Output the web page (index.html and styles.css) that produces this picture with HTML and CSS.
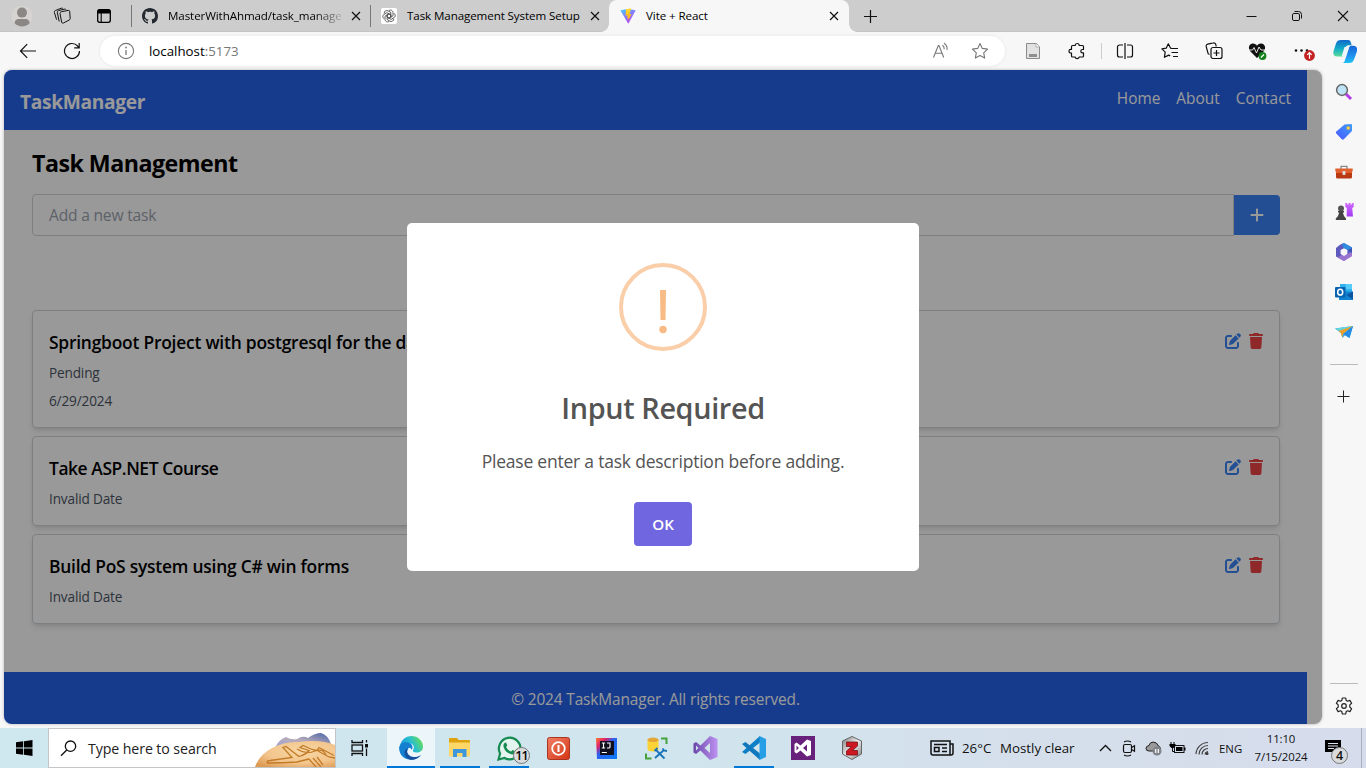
FILE: index.html
```html
<!DOCTYPE html>
<html lang="en">
<head>
<meta charset="utf-8">
<title>Vite + React</title>
<link rel="stylesheet" href="styles.css">
</head>
<body>
<svg class="defs" width="0" height="0">
  <defs>
    <symbol id="edit" viewBox="0 0 512 512"><path d="M471.6 21.7c-21.9-21.9-57.3-21.9-79.2 0L362.3 51.7l97.9 97.9 30.1-30.1c21.9-21.9 21.9-57.3 0-79.2L471.6 21.7zm-299.2 220c-6.1 6.1-10.8 13.6-13.5 21.9l-29.6 88.8c-2.9 8.6-.6 18.1 5.8 24.6s15.9 8.7 24.6 5.8l88.8-29.6c8.2-2.7 15.7-7.4 21.9-13.5L437.7 172.3 339.7 74.3 172.4 241.7zM96 64C43 64 0 107 0 160V416c0 53 43 96 96 96H352c53 0 96-43 96-96V320c0-17.7-14.3-32-32-32s-32 14.3-32 32v96c0 17.7-14.3 32-32 32H96c-17.7 0-32-14.3-32-32V160c0-17.7 14.3-32 32-32h96c17.7 0 32-14.3 32-32s-14.3-32-32-32H96z"/></symbol>
    <symbol id="trash" viewBox="0 0 448 512"><path d="M135.2 17.7L128 32H32C14.3 32 0 46.3 0 64S14.3 96 32 96H416c17.7 0 32-14.3 32-32s-14.3-32-32-32H320l-7.2-14.3C307.4 6.8 296.3 0 284.2 0H163.8c-12.1 0-23.2 6.8-28.6 17.7zM416 128H32L53.2 467c1.6 25.3 22.6 45 47.9 45H346.9c25.3 0 46.3-19.7 47.9-45L416 128z"/></symbol>
    <symbol id="close" viewBox="0 0 10 10"><path d="M1 1l8 8M9 1L1 9" fill="none" stroke="#111" stroke-width="1.2"/></symbol>
    <linearGradient id="gVite" x1="0" y1="0" x2=".6" y2="1"><stop offset="0" stop-color="#41d1ff"/><stop offset="1" stop-color="#bd34fe"/></linearGradient>
    <linearGradient id="gBolt" x1="0" y1="0" x2="0" y2="1"><stop offset="0" stop-color="#ffdd35"/><stop offset="1" stop-color="#ffa800"/></linearGradient>
    <linearGradient id="gCopA" x1="0" y1="0" x2="0" y2="1"><stop offset="0" stop-color="#1268c9"/><stop offset=".5" stop-color="#10a9c8"/><stop offset="1" stop-color="#5bdc9a"/></linearGradient>
    <linearGradient id="gCopB" x1="0" y1="0" x2="0" y2="1"><stop offset="0" stop-color="#1565d8"/><stop offset=".6" stop-color="#2193f0"/><stop offset="1" stop-color="#1cc3f3"/></linearGradient>
    <linearGradient id="gTag" x1="1" y1="0" x2="0" y2="1"><stop offset="0" stop-color="#3ea0ff"/><stop offset="1" stop-color="#4a55ff"/></linearGradient>
    <linearGradient id="gRook" x1="0" y1="0" x2="0" y2="1"><stop offset="0" stop-color="#d06bff"/><stop offset="1" stop-color="#a23af0"/></linearGradient>
    <linearGradient id="gEdge" x1="1" y1=".2" x2="0" y2=".6"><stop offset="0" stop-color="#6fe04c"/><stop offset=".5" stop-color="#28bfd0"/><stop offset="1" stop-color="#1b8fe0"/></linearGradient>
    <linearGradient id="gVs" x1="0" y1="0" x2="1" y2="0"><stop offset="0" stop-color="#6b48a8"/><stop offset="1" stop-color="#bd92f2"/></linearGradient>
    <linearGradient id="gIj" x1="0" y1="0" x2="1" y2="1"><stop offset="0" stop-color="#fc7a2c"/><stop offset=".25" stop-color="#e0206a"/><stop offset=".45" stop-color="#2b62f0"/><stop offset="1" stop-color="#087cfa"/></linearGradient>
    <linearGradient id="gRed" x1="0" y1="0" x2="1" y2="1"><stop offset="0" stop-color="#f08066"/><stop offset="1" stop-color="#d53413"/></linearGradient>
    <linearGradient id="gHill" x1="0" y1="1" x2="1" y2="0"><stop offset="0" stop-color="#9fa4d6"/><stop offset=".5" stop-color="#b7abb9"/><stop offset="1" stop-color="#4864a8"/></linearGradient>
    <radialGradient id="gHand" cx=".6" cy=".4" r=".75"><stop offset="0" stop-color="#f8d7a4"/><stop offset=".6" stop-color="#f3c58d"/><stop offset="1" stop-color="#dd9a52"/></radialGradient>
    <linearGradient id="gSilver" x1="0" y1="0" x2="1" y2="1"><stop offset="0" stop-color="#777"/><stop offset=".5" stop-color="#eee"/><stop offset="1" stop-color="#777"/></linearGradient>
  </defs>
</svg>

<div class="desktop">
  <header class="tabstrip">
    <div class="slot w-avatar"><svg width="22" height="22" viewBox="0 0 22 22"><circle cx="11" cy="11" r="10.5" fill="#d6d4d1"/><circle cx="11" cy="7.6" r="5" fill="#8a8785"/><path d="M3.6 18.3c0-3 2-4.3 4-4.3h7c2 0 4 1.3 4 4.3a10.5 10.5 0 0 1-15 0z" fill="#8a8785"/></svg></div>
    <div class="slot w40"><svg width="18" height="18" viewBox="0 0 18 18" fill="none" stroke="#111" stroke-width="1"><path d="M8.500 4.700l6.700-1.300q1.300-.2 1.500 1l.5 7.200q0 1-1 1.400l-5.800 3q-1.400.6-1.700-.7L7 6.500q-.1-1.500 1.500-1.800z"/><path d="M6.200 14.500L4.300 5.500q-.2-1.500 1.200-1.900l6.200-1.500q1-.2 1.300.6"/><path d="M3.600 12.700L1.400 5.500q-.4-1.500 1-2L8.300 1.200q1-.3 1.500.3"/></svg></div>
    <div class="slot w44"><svg width="16" height="16" viewBox="0 0 16 16"><rect x="1.7" y="1.7" width="12.6" height="12.6" rx="2" fill="none" stroke="#000" stroke-width="1.3"/><path d="M1.500 3a2 2 0 0 1 2-1.800h9a2 2 0 0 1 2 1.800v2.400h-13z"/><path d="M5.200 5v9" stroke="#000" stroke-width="1.1"/></svg></div>
    <div class="tab tab-github">
      <svg width="16" height="16" viewBox="0 0 16 16" fill="#24292f"><path d="M8 0C3.580 0 0 3.580 0 8c0 3.540 2.290 6.530 5.470 7.590.4.070.55-.17.55-.38 0-.19-.01-.82-.01-1.490-2.010.37-2.530-.49-2.690-.94-.09-.23-.48-.94-.82-1.130-.28-.15-.68-.52-.01-.53.63-.01 1.080.58 1.230.82.72 1.210 1.870.87 2.330.66.070-.52.28-.87.51-1.070-1.780-.2-3.640-.89-3.640-3.950 0-.87.31-1.590.82-2.150-.08-.2-.36-1.020.08-2.120 0 0 .67-.21 2.200.82.64-.18 1.320-.27 2-.27s1.360.09 2 .27c1.530-1.040 2.200-.82 2.200-.82.44 1.100.16 1.920.08 2.120.51.56.82 1.270.82 2.150 0 3.070-1.870 3.750-3.650 3.950.29.25.54.73.54 1.480 0 1.070-.01 1.930-.01 2.200 0 .21.15.46.55.38A8.010 8.010 0 0 0 16 8c0-4.420-3.580-8-8-8z"/></svg>
      <span class="tab-title fade">MasterWithAhmad/task_manage</span>
      <svg class="tab-close" width="10" height="10"><use href="#close"/></svg>
    </div>
    <div class="tab">
      <svg width="16" height="16" viewBox="0 0 16 16"><rect width="16" height="16" rx="2" fill="#fff"/><g fill="none" stroke="#444" stroke-width=".8"><g id="petal"><path d="M8 2.400c1.700-1 4 .2 4 2.200v3.200L8 10.100 5.800 8.800"/></g><use href="#petal" transform="rotate(60 8 8)"/><use href="#petal" transform="rotate(120 8 8)"/><use href="#petal" transform="rotate(180 8 8)"/><use href="#petal" transform="rotate(240 8 8)"/><use href="#petal" transform="rotate(300 8 8)"/></g></svg>
      <span class="tab-title t2">Task Management System Setup</span>
      <svg class="tab-close" width="10" height="10"><use href="#close"/></svg>
    </div>
    <div class="tab active">
      <svg width="16" height="16" viewBox="0 0 16 16"><path d="M.3 2.200L8 1l7.700 1.200L8.300 15.800z" fill="url(#gVite)"/><path d="M11.300.3L6 1.300l-.4 6.500 2-.5-.5 3.200 1.500-.4-.8 3.400 3.800-7.600-2.200.3z" fill="url(#gBolt)"/></svg>
      <span class="tab-title t3">Vite + React</span>
      <svg class="tab-close" width="10" height="10"><use href="#close"/></svg>
    </div>
    <div class="slot w42"><svg width="15" height="15" viewBox="0 0 15 15"><path d="M7.500 1v13M1 7.500h13" stroke="#111" stroke-width="1.2"/></svg></div>
    <div class="window-controls">
      <div class="slot w46"><svg width="11" height="11" viewBox="0 0 11 11"><path d="M.5 5.500h10" stroke="#111"/></svg></div>
      <div class="slot w46"><svg width="12" height="12" viewBox="0 0 12 12" fill="none" stroke="#111"><rect x="1.5" y="3.5" width="7" height="7" rx="1.4"/><path d="M3.500 1.500h4a3 3 0 0 1 3 3v4"/></svg></div>
      <div class="slot w46"><svg width="12" height="12" viewBox="0 0 12 12"><path d="M1 1l10 10M11 1L1 11" stroke="#111" stroke-width="1.1"/></svg></div>
    </div>
  </header>

  <div class="toolbar">
    <div class="slot w-back"><svg width="18" height="16" viewBox="0 0 18 16" fill="none" stroke="#111" stroke-width="1.2"><path d="M17 8H1.500M8.200 1.200L1.500 8l6.700 6.800"/></svg></div>
    <div class="slot w44"><svg width="18" height="18" viewBox="0 0 18 18" fill="none" stroke="#111" stroke-width="1.2"><path d="M16.500 9A7.500 7.500 0 1 1 14.600 4L16.200 5.600M16.200 1v4.800h-5"/></svg></div>
    <div class="address">
      <svg width="18" height="18" viewBox="0 0 18 18"><circle cx="9" cy="9" r="7.6" fill="none" stroke="#777" stroke-width="1.1"/><path d="M9 8v5" stroke="#777" stroke-width="1.3"/><circle cx="9" cy="5.5" r=".9" fill="#777"/></svg>
      <span class="url">localhost<i>:5173</i></span>
      <div class="slot w40"><svg width="18" height="18" viewBox="0 0 18 18" fill="none" stroke="#777" stroke-width="1.1"><path d="M2.500 15.500L7.300 3.500h.7l4.700 12M4.200 11.200h6.800M11.500 3.200c1.300 1 1.900 2.300 1.700 4M13 1.300c2.500 1.700 3.500 4 3 6.600"/></svg></div>
      <div class="slot w40"><svg width="18" height="18" viewBox="0 0 18 18" fill="none" stroke="#777" stroke-width="1.1" stroke-linejoin="round"><path d="M9 1.500l2.300 4.900 5.300.7-3.900 3.700 1 5.300L9 13.500l-4.700 2.600 1-5.300L1.400 7.100l5.300-.7z"/></svg></div>
    </div>
    <div class="slot w-doc"><svg width="16" height="18" viewBox="0 0 16 18"><path d="M1.500 1.500h10L14.500 5v11.500h-13z" fill="#e2e2e2" stroke="#8b8b8b"/><path d="M4 12h8v3H4z" fill="#8f8f8f"/><path d="M11 1.500V5h3.500" fill="#fff" stroke="#999" stroke-width=".7"/></svg></div>
    <div class="slot w44"><svg width="18" height="18" viewBox="0 0 18 18" fill="none" stroke="#111" stroke-width="1.2" stroke-linejoin="round"><path d="M4.500 3.500h2.700a2 2 0 0 1 4 0h3.300q1 0 1 1v3h-1a1.700 1.700 0 0 0 0 3.400h1v3.100q0 1-1 1h-3.300a2.100 2.100 0 0 1-4.100 0H4.500q-1 0-1-1v-3h-.7a1.800 1.800 0 0 1 0-3.600h.7V4.500q0-1 1-1z"/></svg></div>
    <div class="divider"></div>
    <div class="slot w-split"><svg width="18" height="18" viewBox="0 0 18 18" fill="none" stroke="#111" stroke-width="1.2"><path d="M7 3H3.500a2 2 0 0 0-2 2v8a2 2 0 0 0 2 2H7M11 3h3.500a2 2 0 0 1 2 2v8a2 2 0 0 1-2 2H11M9 1v16"/></svg></div>
    <div class="slot w44"><svg width="18" height="18" viewBox="0 0 18 18" fill="none" stroke="#111" stroke-width="1.2" stroke-linejoin="round"><path d="M10.500 6.400L9.600 6.200 7.300 1.800 5.200 6.200.9 6.900l3.300 3.200-.8 5.200 4.300-2.200 1.500.8M10.500 6.500H17M10.500 10.500H17M12 14.500h5"/></svg></div>
    <div class="slot w44"><svg width="18" height="18" viewBox="0 0 18 18" fill="none" stroke="#111" stroke-width="1.2"><path d="M4.500 12.500A2.500 2.500 0 0 1 2.700 10L1.200 4.500a2 2 0 0 1 1.500-2.400L8.300.9a2 2 0 0 1 2.500 1.600l.4 2"/><rect x="6" y="5.500" width="11" height="11" rx="2"/><path d="M11.500 8v6M8.500 11h6"/></svg></div>
    <div class="slot w44"><svg width="20" height="18" viewBox="0 0 20 18"><path d="M9 16L2 9C-.5 5.500 1.500 1.500 5 1.500c2 0 3.200 1 4 2.200 1-1.400 2.300-2.200 4-2.200 3.500 0 5.500 4 3 7.500z" fill="#111"/><path d="M.5 8h4L6 5.500l2.500 5.500 2.500-6 2 3h4.500" fill="none" stroke="#f7f7f7" stroke-width=".9"/><circle cx="14.500" cy="14" r="3.9" fill="#16801d"/><path d="M12.900 15.500l3.100-3" stroke="#fff" stroke-width="1.2"/></svg></div>
    <div class="slot w44 dots"><svg width="22" height="20" viewBox="0 0 22 20"><g fill="#111"><circle cx="3" cy="9.500" r="1.3"/><circle cx="8.500" cy="9.500" r="1.3"/><circle cx="14" cy="9.500" r="1.3"/></g><circle cx="16.500" cy="14.500" r="5.400" fill="#c42323"/><path d="M16.500 17.700V11.800M14.300 13.900l2.200-2.200 2.200 2.200" fill="none" stroke="#fff" stroke-width="1.2"/></svg></div>
    <div class="slot w-copilot"><svg width="24" height="23" viewBox="0 0 24 23"><path d="M8 0h7c2 0 2.500 1.200 3 3l.7 2.300h-3.200c-2 0-2.800 1.400-3.300 3L9.700 16.500H4.200C.7 16.500-.2 14 .6 11L3 3.500C3.800 1 5.500 0 8 0z" fill="url(#gCopA)"/><path d="M16 23H9c2 0 2.500-1.200 3-3l3.900-11.500c.4-1.700.9-2.700 2.400-2.700h1.900c3.600 0 4.500 2.500 3.700 5.600L21 19.500c-.8 2.500-2.500 3.500-5 3.500z" fill="url(#gCopB)"/><path d="M11.500 7h4L12.500 16H8.700z" fill="#eaf6fa"/></svg></div>
  </div>

  <div class="middle">
    <div class="viewport">
      <div class="page">
        <nav class="navbar">
          <span class="brand">TaskManager</span>
          <div class="links"><a class="l-home">Home</a><a class="l-about">About</a><a class="l-contact">Contact</a></div>
        </nav>
        <main class="content">
          <h1>Task Management</h1>
          <div class="add-row">
            <div class="field">Add a new task</div>
            <button class="add"><svg width="16" height="16" viewBox="0 0 448 512" fill="#fff"><path d="M256 80c0-17.700-14.300-32-32-32s-32 14.300-32 32V224H48c-17.700 0-32 14.300-32 32s14.300 32 32 32H192V432c0 17.700 14.300 32 32 32s32-14.300 32-32V288H400c17.700 0 32-14.300 32-32s-14.300-32-32-32H256V80z"/></svg></button>
          </div>
          <section class="tasks">
            <article class="task">
              <div><h2 class="s1">Springboot Project with postgresql for the database</h2><p>Pending</p><p class="date">6/29/2024</p></div>
              <div class="actions"><svg class="edit" width="16" height="16"><use href="#edit"/></svg><svg class="trash" width="14" height="16"><use href="#trash"/></svg></div>
            </article>
            <article class="task">
              <div><h2 class="s2">Take ASP.NET Course</h2><p>Invalid Date</p></div>
              <div class="actions"><svg class="edit" width="16" height="16"><use href="#edit"/></svg><svg class="trash" width="14" height="16"><use href="#trash"/></svg></div>
            </article>
            <article class="task">
              <div><h2 class="s3">Build PoS system using C# win forms</h2><p>Invalid Date</p></div>
              <div class="actions"><svg class="edit" width="16" height="16"><use href="#edit"/></svg><svg class="trash" width="14" height="16"><use href="#trash"/></svg></div>
            </article>
          </section>
        </main>
        <footer class="footer"><span>© 2024 TaskManager. All rights reserved.</span></footer>
      </div>
      <div class="overlay">
        <div class="modal">
          <svg class="warn" width="88" height="88" viewBox="0 0 88 88"><circle cx="44" cy="44" r="42" fill="none" stroke="#facea8" stroke-width="4"/><path d="M41 27h6l-.5 30h-5z" fill="#f8bb86"/><circle cx="44" cy="66.500" r="3.700" fill="#f8bb86"/></svg>
          <h2 class="modal-title">Input Required</h2>
          <p class="modal-text">Please enter a task description before adding.</p>
          <button class="ok">OK</button>
        </div>
      </div>
    </div>

    <aside class="sidebar">
      <div class="side-item"><svg width="18" height="18" viewBox="0 0 18 18"><path d="M11 11l5 5" stroke="#b43bea" stroke-width="3"/><circle cx="7" cy="7" r="5.4" fill="#bfe3f7" stroke="#666" stroke-width="1.5"/></svg></div>
      <div class="side-item"><svg width="18" height="18" viewBox="0 0 18 18"><path d="M9.500 1.500L16 1q1 0 1 1v6l-8.200 8.300q-1 .9-2 0L1.300 10.500q-.8-1 0-2z" fill="url(#gTag)"/><circle cx="13.300" cy="5" r="1.6" fill="#ffe25c" stroke="#d9a01e" stroke-width=".6"/></svg></div>
      <div class="side-item"><svg width="18" height="18" viewBox="0 0 18 18"><path d="M6 6V3.300h6V6" fill="none" stroke="#888" stroke-width="1.3"/><path d="M1 5.500h16q1 0 .8 1L17 10H1L.2 6.500q-.2-1 .8-1z" fill="#e0602e"/><path d="M1 10h16v4q0 1.500-1.500 1.500h-13Q1 15.500 1 14z" fill="#b83912"/><rect x="7.5" y="8" width="3" height="4" rx=".8" fill="#ddd"/></svg></div>
      <div class="side-item"><svg width="19" height="18" viewBox="0 0 19 18"><path d="M10.300 0h1.900v1.500h1.300V0h2v1.500h1.300V0h1.900v4l-1.500 1 .8 8.500h-6.300L11.800 5l-1.500-1z" fill="url(#gRook)"/><circle cx="6" cy="5.500" r="3" fill="#555"/><path d="M3 8h6v1.500H7.800L9 13l2 2.500V17H.8v-1.500L3 13l1.200-3.500H3z" fill="#444"/></svg></div>
      <div class="side-item"><svg width="18" height="18" viewBox="0 0 18 18"><path d="M5 1.800L9 0l8 4.500v7L9 18l-8-4.500V5z" fill="#5e59bd"/><path d="M7 .8L9 0l8 4.500v5.500L11.500 6.500 8.500 5z" fill="#2f8ee0"/><path d="M2.500 14.500l4.500-2.700h5l5-3.500v5L9 18z" fill="#9a74cf"/><path d="M12.500 7l4.500 3V5z" fill="#3d54b4"/><path d="M9 5.200l3.400 1.900v3.900L9 12.900l-3.400-1.900V7.100z" fill="#f7f7f7"/></svg></div>
      <div class="side-item"><svg width="18" height="18" viewBox="0 0 18 18"><path d="M5 1h12v9H5z" fill="#2fb2ed"/><path d="M11 1h6v5h-6z" fill="#55cdf8"/><path d="M4 8.500h14V17H4z" fill="#1183d4"/><path d="M18 8.500v8L11.500 12z" fill="#0d559f"/><rect x="0" y="4" width="10.5" height="10.5" rx="1" fill="#0864b1"/><ellipse cx="5.200" cy="9.200" rx="2.500" ry="2.900" fill="none" stroke="#fff" stroke-width="1.5"/></svg></div>
      <div class="side-item"><svg width="18" height="18" viewBox="0 0 18 18"><path d="M0 5.500L18 3l-3.500 12-4.500-2.800L7.500 15 6 10z" fill="#32a5ee"/><path d="M0 5.500L18 3 5.800 9.500z" fill="#63d3dc"/><path d="M3.500 8L18 3 8 11l-.5 4L5.700 9.700z" fill="#eaa22b"/><path d="M18 3l-3.500 12L8.500 11z" fill="#218be5"/></svg></div>
      <div class="rule"></div>
      <div class="side-plus"><svg width="13" height="13" viewBox="0 0 13 13"><path d="M6.500.5v12M.5 6.500h12" stroke="#222"/></svg></div>
      <div class="rule bottom"></div>
      <div class="side-gear"><svg width="18" height="18" viewBox="0 0 18 18" fill="none" stroke="#222" stroke-width="1.2" stroke-linejoin="round"><path d="M7.300 1h3.400l.5 2.400 1.400.8 2.300-.8 1.700 2.900-1.800 1.600v2.200l1.800 1.600-1.700 2.900-2.300-.8-1.400.8-.5 2.400H7.300l-.5-2.400-1.400-.8-2.300.8-1.700-2.900 1.800-1.600V7.900L1.400 6.300l1.700-2.900 2.300.8 1.400-.8z"/><circle cx="9" cy="9" r="2.3"/></svg></div>
    </aside>
  </div>

  <div class="taskbar">
    <div class="slot start"><svg width="17" height="16" viewBox="0 0 17 16"><path d="M0 2.300l7.200-1v6.300H0zM8 1.200L16.500 0v7.600H8zM0 8.400h7.200v6.300l-7.200-1zM8 8.400h8.500V16L8 14.800z"/></svg></div>
    <div class="search">
      <svg class="mag" width="17" height="17" viewBox="0 0 17 17" fill="none" stroke="#111" stroke-width="1.3"><circle cx="10.500" cy="6.200" r="5.200"/><path d="M6.700 10L1 15.800"/></svg>
      <span>Type here to search</span>
      <svg class="hands" width="80" height="34" viewBox="0 0 80 34"><path d="M20 15q3-8 11-11 5 3 11 2 6-4 11-1 7-5 13-5 7 2 10 11l-10 5z" fill="url(#gHill)"/><path d="M0 34Q4 22 17 15T44 9q21-3 36 3v22z" fill="url(#gHand)"/><path d="M12 29.500q0-2 3-2l22-3-9-10 3-1 13 10q7-2 10-6l-9-3 3-2 9 4 5 1 2-3 15 8M12 30q16 0 30-1l12-3M54 26l7 8M58 25l8 9M62 24l6 8M63 18l11 6 6 1M42 16q9 6 18 2 8-3 11 4" fill="none" stroke="#c27c28" stroke-width="1.300"/></svg>
    </div>
    <div class="slot taskview"><svg width="18" height="16" viewBox="0 0 18 16" fill="none" stroke="#111" stroke-width="1.3"><path d="M1 0v2.500h10.500V0M1 16v-2.500h10.500V16"/><rect x="1" y="5" width="10.500" height="6"/><path d="M15.500 0v2.500M15.500 8.500V16"/><path d="M15.500 4v3.500" stroke-width="3"/></svg></div>
    <div class="apps">
      <div class="app current"><svg width="24" height="24" viewBox="0 0 24 24"><path d="M1 9C3 3 7.500 0 12.500 0 19 0 24 5 24 10.500c0 4-3 6-6.500 6-3 0-4-1.300-3.500-2.300 2.500-4-.5-7-4-7C6 7.200 2.500 9.500 1 9z" fill="url(#gEdge)"/><path d="M.1 11.500C1 7.500 5 5.500 9 6.500c4 1 5.200 4 4.200 6.500-1 2-.5-1.500-3.200-1.300-3 2-3 8 1.500 11.800C5 24 0 18.500.1 11.500z" fill="#1580d0"/><path d="M9 12.500c-2.500 4 1 8.500 6 8.500 3 0 5-.9 7.200-2.300C19.500 22.500 16 24 12 24 8 23 5 19.500 5.500 16c.3-2 1.500-3.200 3.500-3.500z" fill="#154f9e"/></svg></div>
      <div class="app open"><svg width="22" height="20" viewBox="0 0 22 20"><path d="M0 1q0-1 1-1h7l1.500 2H20q1 0 1 1v4H0z" fill="#dda20d"/><path d="M0 4.500h20.500q.5 0 .5.500v12.500q0 1-1 1H1q-1 0-1-1z" fill="#ffd668"/><path d="M4 19v-8h13.500v8H13.500v-4H8v4z" fill="#3d97dd"/></svg></div>
      <div class="app open"><svg width="25" height="25" viewBox="0 0 25 25"><path d="M1.500 23.500l1.600-6A10.800 10.800 0 1 1 7.500 22z" fill="#e4f4ee" stroke="#158a51" stroke-width="2.200"/><path d="M9 6.500l1.300 3-1.200 1.600c1.200 2.300 2.700 3.600 5 4.500l1.500-1.700 3 1.500c0 2-1.700 3-3.500 3-4.500-.7-8.300-4.500-8.700-8.700C6.500 8 7.500 6.500 9 6.500z" fill="#158a51"/></svg><b class="count wa">11</b></div>
      <div class="app"><svg width="23" height="23" viewBox="0 0 23 23"><rect x=".5" y=".5" width="22" height="22" rx="2" fill="url(#gRed)" stroke="#aa3520"/><circle cx="11.500" cy="11.500" r="6.3" fill="none" stroke="#fff" stroke-width="1.8"/><path d="M11.500 8v7" stroke="#fff" stroke-width="2"/></svg></div>
      <div class="app"><svg width="22" height="22" viewBox="0 0 22 22"><path d="M0 1h21v21H1z" fill="url(#gIj)"/><rect x="4" y="4" width="14" height="14" fill="#111020"/><path d="M5.800 6h3.400M7.500 6v5M5.800 11h3.400M11 6h3v4q0 1-1.200 1H11M5.800 15.500h5" fill="none" stroke="#fff" stroke-width="1.1"/></svg></div>
      <div class="app"><svg width="23" height="23" viewBox="0 0 23 23"><path d="M2.500 2.500v10c0 2.500 11 2.500 11 0v-10z" fill="#fbd338"/><ellipse cx="8" cy="2.800" rx="5.500" ry="2.300" fill="#e3a637"/><path d="M16 1.500h5.500V7M1 16.500v5h5.500" fill="none" stroke="#45a33b" stroke-width="2"/><path d="M10 21l9-8M11 13l8.500 8.500M9.500 14l3-3M17.500 11.500l1.500 2 3 .5" stroke="#1673b9" stroke-width="1.800" fill="none"/></svg></div>
      <div class="app"><svg width="25" height="24" viewBox="0 0 25 24"><path d="M17 0l7.500 3v18L17 24 7.500 14.500 3 18l-2.500-1.500v-9L3 6l4.500 3.500zM3 9.500v5L5.500 12zM17 7l-5.500 5 5.500 5z" fill="url(#gVs)" fill-rule="evenodd"/></svg></div>
      <div class="app open"><svg width="24" height="24" viewBox="0 0 24 24"><path d="M18 0v6.500L3.500 18 0 16z" fill="#0d7fc6"/><path d="M0 8l3.500-2L18 17.500V24z" fill="#1178bd"/><path d="M17.500 0L24 3v18l-6.500 3z" fill="#269fe6"/></svg></div>
      <div class="app"><svg width="24" height="24" viewBox="0 0 24 24"><rect width="24" height="24" fill="#68217a"/><path d="M16 3.500l4 1.600v13.800l-4 1.600-6.500-6-4 3L3.500 16V8l2-1.500 4 3zM5.500 9.500v5L7.800 12zM16 8.500L12 12l4 3.500z" fill="#fff" fill-rule="evenodd"/></svg></div>
      <div class="app"><svg width="22" height="24" viewBox="0 0 22 24"><path d="M11 .5L20.500 5v13L11 23.500 1.500 18V5z" fill="url(#gSilver)" stroke="#666"/><path d="M5.500 6h11v4l-5 4.500h5V19h-11v-4l5-4.500h-5z" fill="#cf1820" stroke="#741016" stroke-width=".8"/></svg></div>
    </div>
    <div class="tray">
      <svg class="news" width="24" height="16" viewBox="0 0 24 16" fill="none" stroke="#111" stroke-width="1.5"><path d="M1 1h19v14H3q-2 0-2-2zM20 4h3v9q0 2-2 2h-2M4 4.500h13M12 8h5M12 11.500h5"/><rect x="4.5" y="7.5" width="4.5" height="4"/></svg>
      <span class="temp">26°C</span><span class="clear">Mostly clear</span>
      <div class="slot w24"><svg width="13" height="8" viewBox="0 0 13 8" fill="none" stroke="#111" stroke-width="1.3"><path d="M1 7l5.500-5.500L12 7"/></svg></div>
      <div class="slot w24"><svg width="14" height="17" viewBox="0 0 14 17" fill="none" stroke="#111" stroke-width="1.2"><rect x="1.500" y="4.500" width="8" height="8" rx="1.500"/><path d="M9.500 7.500l3-1.800v5.600l-3-1.800M2 2Q5.500 0 9 2M2 15q3.500 2 7 0"/></svg></div>
      <div class="slot w24"><svg width="17" height="16" viewBox="0 0 17 16"><path d="M4 11Q1 11 1 8.500 1 6 4 5.500 5 2 8 2q4 0 5.500 4Q16 7 15.500 10L14 11z" fill="#999" stroke="#222"/><circle cx="12" cy="11" r="4.5" fill="#808389"/><path d="M10.700 9v4M13.300 9v4" stroke="#fff" stroke-width="1.2"/></svg></div>
      <div class="slot w24"><svg width="17" height="14" viewBox="0 0 17 14"><rect x="5.500" y="4.500" width="9.500" height="7" fill="none" stroke="#111"/><path d="M7 6h6.500v4H7zM15 6.500h1.500v3H15zM1.500 1h1v2h-1zM4.500 1h1v2h-1zM.5 3h6v2l-2 2h-2l-2-2z"/><path d="M3.500 7v3.500h2" fill="none" stroke="#111"/></svg></div>
      <div class="slot w26"><svg width="14" height="14" viewBox="0 0 14 14" fill="none" stroke="#444" stroke-width="1.2"><path d="M1 13A12 12 0 0 1 13 1.500M4 13.500a9 9 0 0 1 9-9M7 13.500A6 6 0 0 1 13 7.500M10 13.500a3.500 3.500 0 0 1 3-3"/><circle cx="12" cy="12.500" r="1" fill="#111"/></svg></div>
      <span class="lang">ENG</span>
      <div class="clock"><span class="time">11:10</span><span class="day">7/15/2024</span></div>
      <div class="slot notify"><svg width="16" height="16" viewBox="0 0 16 16"><path d="M0 0h16v12h-5v3.500L7.500 12H0z"/><path d="M3 3.500h10M3 6h10M3 8.500h6" stroke="#dce2ec"/></svg><b class="count bell">4</b></div>
    </div>
  </div>
</div>
</body>
</html>
```
FILE: styles.css
```css
* { box-sizing: border-box; }
body { margin: 0; font-family: "Open Sans", "Noto Sans", sans-serif; color: #000; overflow: hidden; }
h1, h2, p { margin: 0; }
button { border: 0; padding: 0; font-family: inherit; }
svg { display: block; flex: none; }
.defs { position: absolute; }
.desktop { width: 1366px; height: 768px; display: flex; flex-direction: column; background: #f7f7f7; }
.slot { display: flex; align-items: center; justify-content: center; flex: none; }
.w24 { width: 24px; }
.w26 { width: 26px; }
.w40 { width: 40px; }
.w42 { width: 42px; }
.w44 { width: 44px; }
.w46 { width: 46px; }

/* Tab strip */
.tabstrip { height: 32px; background: #cdcdcd; display: flex; flex: none; box-shadow: inset 0 -1px #c4c4c4; }
.w-avatar { width: 42px; padding-left: 2px; }
.tab { width: 239px; display: flex; align-items: center; flex: none; padding: 0 10px; border-left: 1px solid transparent; border-image: linear-gradient(transparent 6px, #777 6px, #777 26px, transparent 26px) 1; }
.tab-github { margin-left: 5px; }
.tab-title { font-size: 11.6px; letter-spacing: -.1px; margin-left: 10px; width: 173px; white-space: nowrap; line-height: 20px; }
.fade { mask-image: linear-gradient(90deg, #000 84%, transparent 103%); }
.tab-close { margin-left: 10px; }
.tab.active { width: 240px; background: #f7f7f7; border: 0; border-radius: 8px 8px 0 0; padding-left: 11px; position: relative; }
.tab.active::before, .tab.active::after { content: ""; position: absolute; bottom: 0; width: 8px; height: 8px; }
.tab.active::before { left: -8px; background: radial-gradient(circle at 0 0, transparent 7.5px, #f7f7f7 8px); }
.tab.active::after { right: -8px; background: radial-gradient(circle at 100% 0, transparent 7.5px, #f7f7f7 8px); }
.tab-title.t3 { width: 181px; }
.window-controls { display: flex; margin-left: auto; }

/* Toolbar */
.toolbar { height: 38px; display: flex; align-items: center; flex: none; }
.w-back { width: 50px; padding-left: 6px; }
.address { margin-left: 6px; width: 905px; height: 30px; border-radius: 15px; background: #fff; display: flex; align-items: center; padding: 0 5px 0 17px; box-shadow: 0 0 3px #e3e3e3; }
.url { font-size: 13.3px; margin-left: 14px; flex: 1; }
.url i { font-style: normal; color: #777; }
.w-doc { width: 50px; padding-left: 6px; }
.divider { width: 1px; height: 16px; background: #ccc; margin-left: 2px; }
.w-split { width: 46px; }
.w-copilot { width: 42px; }
.dots { padding-left: 3px; }

/* Browser content */
.middle { height: 658px; display: flex; flex: none; padding-left: 4px; }
.viewport { width: 1318px; height: 654px; border-radius: 8px; overflow: hidden; position: relative; background: #fff; box-shadow: 0 0 3px #aaa; }
.page { width: 1303px; height: 654px; display: flex; flex-direction: column; }
.navbar { height: 60px; background: #2563eb; color: #fff; display: flex; align-items: center; justify-content: space-between; padding: 0 16px; }
.brand { font-size: 19.2px; letter-spacing: -.35px; font-weight: 700; padding-top: 2px; }
.links { display: flex; gap: 16px; font-size: 15.4px; padding-bottom: 4px; }
.content { flex: 1; padding: 16px 27px 0 28px; }
h1 { font-size: 23.2px; letter-spacing: -.5px; line-height: 32px; font-weight: 700; padding-top: 1px; height: 34px; }
.add-row { display: flex; align-items: center; margin-top: 14px; }
.field { flex: 1; height: 42px; border: 1px solid #d1d5db; border-radius: 4px 0 0 4px; padding: 0 16px; line-height: 40px; font-size: 15.6px; letter-spacing: -.2px; color: #9ca3af; }
.add { width: 46px; height: 40px; border-radius: 0 4px 4px 0; background: #3b82f6; display: flex; align-items: center; justify-content: center; }
.tasks { margin-top: 74px; display: flex; flex-direction: column; gap: 8px; }
.task { display: flex; justify-content: space-between; border: 1px solid #d1d5db; border-radius: 4px; padding: 16px; background: #fff; box-shadow: 0 4px 6px -1px rgba(0,0,0,.1), 0 2px 4px -2px rgba(0,0,0,.1); }
.task h2 { font-size: 17.4px; letter-spacing: -.22px; line-height: 28px; height: 28px; padding-top: 1px; font-weight: 600; }
.task .s2 { letter-spacing: -.42px; }
.task p { font-size: 13.6px; letter-spacing: -.15px; line-height: 20px; margin-top: 8px; color: #4b5563; }
.actions { display: flex; gap: 8px; padding-top: 6px; }
.edit { fill: #3b82f6; }
.trash { fill: #ef4444; }
.footer { height: 52px; background: #2563eb; color: #fff; text-align: center; font-size: 15.4px; letter-spacing: -.12px; line-height: 56px; }

/* Alert dialog */
.overlay { position: absolute; inset: 0; background: rgba(0,0,0,.4); display: flex; align-items: center; justify-content: center; }
.modal { width: 512px; height: 348px; background: #fff; border-radius: 5px; display: flex; flex-direction: column; align-items: center; padding-top: 40px; color: #545454; }
.modal-title { font-size: 28.8px; letter-spacing: -.35px; line-height: 40px; font-weight: 600; margin-top: 37px; }
.modal-text { font-size: 17.5px; letter-spacing: -.22px; line-height: 24px; margin-top: 21px; }
.ok { width: 58px; height: 44px; margin-top: 29px; border-radius: 4px; background: #7066e0; color: #fff; font-size: 15.2px; font-weight: 600; }

/* Edge sidebar */
.sidebar { width: 44px; display: flex; flex-direction: column; align-items: center; padding-top: 2px; }
.side-item { height: 40px; display: flex; align-items: center; }
.rule { width: 28px; height: 1px; background: #bbb; margin-top: 12px; }
.side-plus { margin-top: 25px; padding-right: 1px; }
.rule.bottom { margin-top: auto; }
.side-gear { padding: 13px 0 13px; }

/* Windows taskbar */
.taskbar { height: 40px; flex: none; display: flex; background: linear-gradient(90deg, #cfe7ef, #d0e5ed 50%, #d5dfeb 75%, #d6dcec); }
.start { width: 48px; }
.search { width: 288px; height: 40px; background: #fff; border: 1px solid #c2c6c8; display: flex; align-items: center; padding-left: 11px; font-size: 14.2px; letter-spacing: -.1px; color: #222; }
.search span { margin-left: 11px; width: 168px; white-space: nowrap; }
.hands { align-self: flex-end; }
.taskview { width: 48px; }
.apps { display: flex; gap: 1px; margin-left: 3px; }
.app { width: 48px; height: 40px; display: flex; align-items: center; justify-content: center; position: relative; }
.app.open { background: linear-gradient(#0078d7, #0078d7) center bottom / 40px 2px no-repeat; }
.app.current { background: linear-gradient(#0078d7, #0078d7) center bottom / 48px 2px no-repeat, #ecf6fa; }
.count { position: absolute; width: 17px; height: 17px; border-radius: 50%; border: 1px solid #777; background: #d9dbdc; font-size: 12.5px; font-weight: 600; line-height: 15px; text-align: center; }
.wa { left: 28px; top: 19px; letter-spacing: -1px; }
.bell { left: 12px; top: 19px; }
.tray { margin-left: auto; display: flex; align-items: center; font-size: 13.3px; border-right: 1px solid #a9b1bd; margin-right: 4px; color: #111; }
.news { margin-right: 8px; }
.temp { width: 38px; }
.clear { width: 93px; white-space: nowrap; }
.lang { font-size: 11.4px; width: 28px; margin-left: 4px; }
.clock { width: 68px; display: flex; flex-direction: column; text-align: center; font-size: 11.4px; letter-spacing: -.1px; line-height: 18px; margin-right: 4px; }
.notify { width: 42px; height: 40px; position: relative; padding-right: 15px; }
```
